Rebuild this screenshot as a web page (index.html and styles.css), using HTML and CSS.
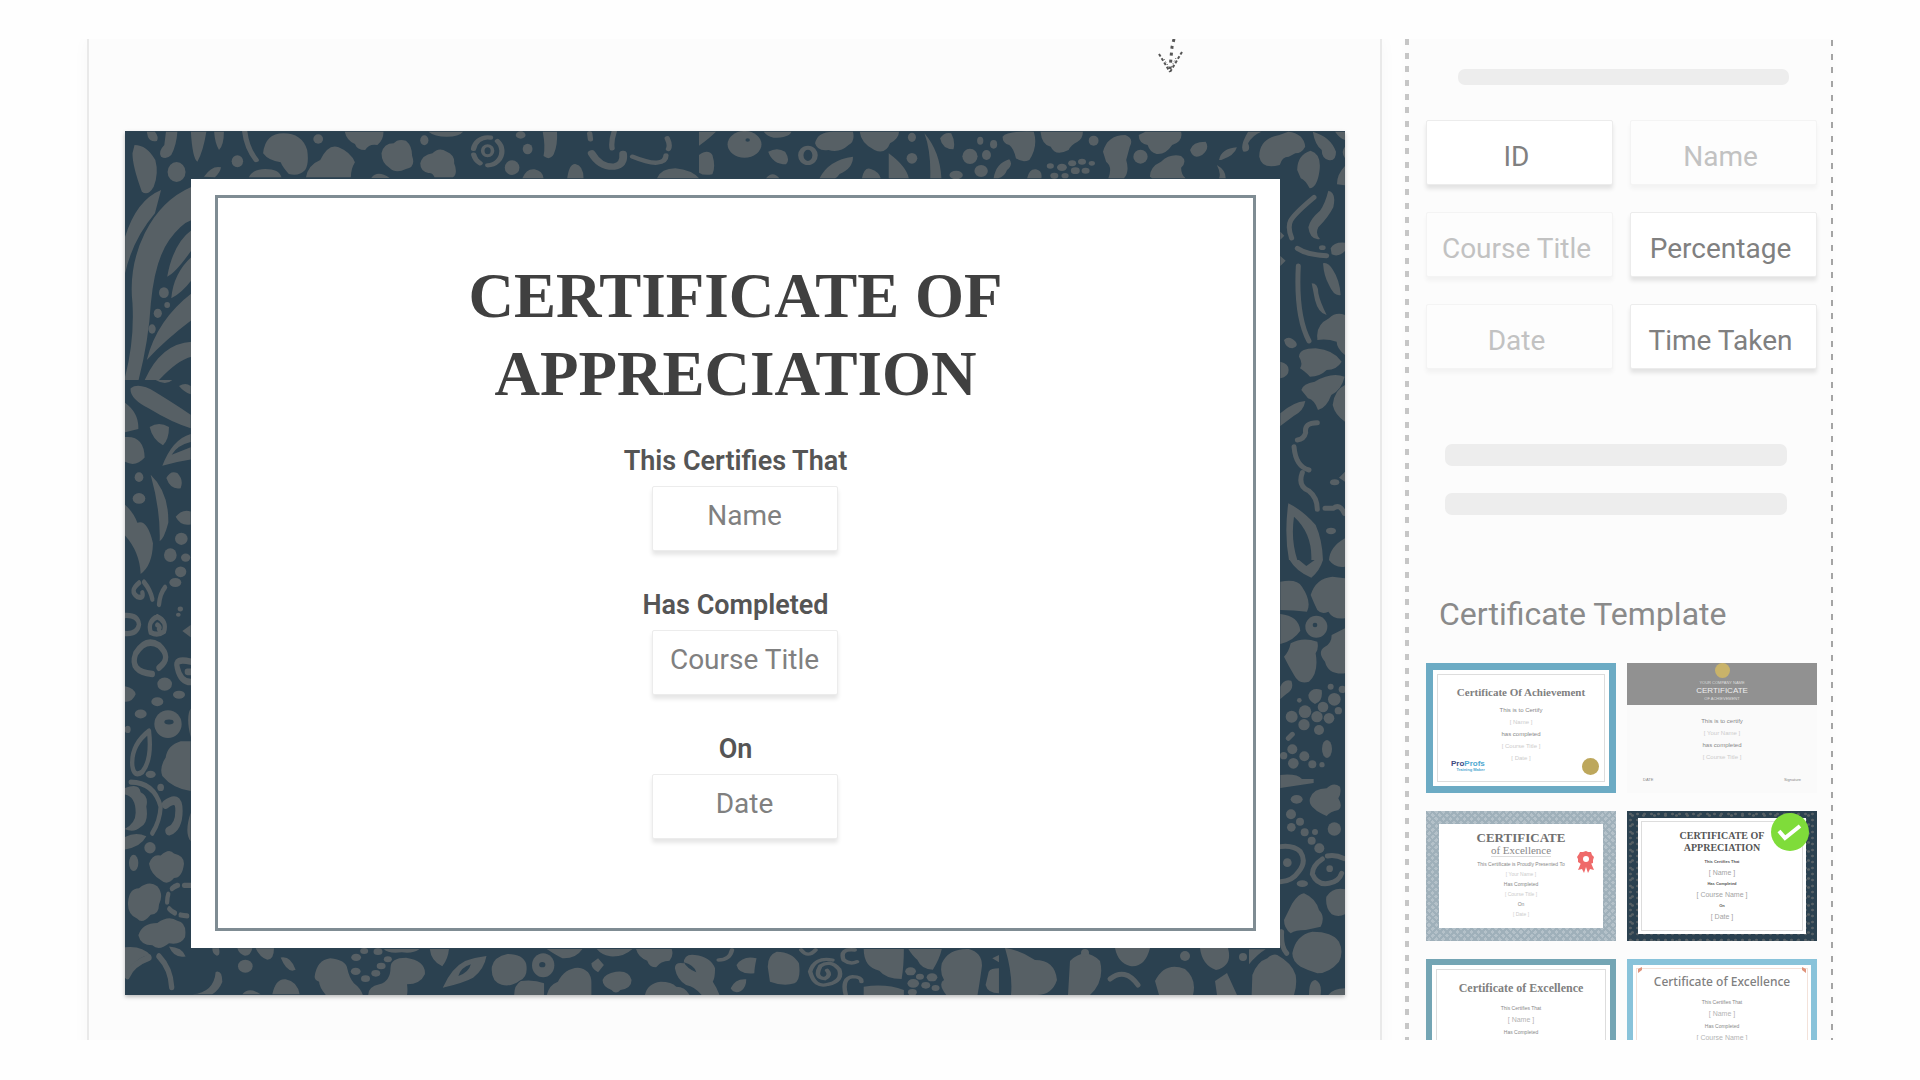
FILE: index.html
```html
<!DOCTYPE html>
<html lang="en">
<head>
    <meta charset="UTF-8">
    <meta name="viewport" content="width=device-width, initial-scale=1.0">
    <title>Certificate Designer</title>
    <link rel="stylesheet" href="styles.css">
</head>
<body>
    <div class="designer">
        <main class="canvas">
            <div class="canvas-head">
                <svg class="arrow" viewBox="0 0 26 36" width="26" height="36" aria-hidden="true">
                    <path d="M16 0 L14 8 L12 30" stroke-width="3" stroke-dasharray="3 4"/>
                    <path d="M1 15 L12 33 M24 13 L12 33" stroke-width="2" stroke-dasharray="3 2"/>
                    <path d="M6 20 L12 30 M18 19 L12 30" stroke-width="1" stroke-dasharray="1 2"/>
                </svg>
            </div>

            <section class="certificate">
                <svg class="floral" viewBox="0 0 1220 864" preserveAspectRatio="none" aria-hidden="true">
                    <!-- top left corner, top edge and left leaves -->
                    <g transform="translate(-66 -111) scale(.4082 .3333)">
                        <path d="M185 375Q215 375 236 420Q245 460 232 500Q218 530 203 515Q180 440 180 400ZM215 335h20q10 15 5 28q-15 5-22-12zM262 335h28q-2 40-15 70q-12 15-25 5q-8-15 8-35zM323 335h38q-8 60-22 90q-12-10-16-90M380 335h24q0 40-12 55q-10-20-12-55M355 470q20-35 42-28q-2 15-15 30z"/>
                        <path d="M500 400q5-60 50-60q45 0 58 50q5 40-5 60q-15 20-40 12q-15-20-20-35q-30-5-43-27M605 472q5-37 35-52q20-50 45-38q30 15 40 45q-10 20-10 45zM465 472q10-25 40-25q35 0 40 25zM700 335h95q0 25-15 40q-20-5-30 15q-20 0-25-18q-20-10-25-37M790 400q5-30 30-30q10-15 30-8q15 15 15 45q10 35-15 40q-25 15-40-3q-20-15-20-44M885 430q5-25 30-30q15-20 35-5q20 10 18 35q10 30-3 42h-45q-5-15-15-13q-20-5-20-29M905 335h85q-10 15-40 15q-30 0-45-15M765 474q15-25 45 0z"/>
                        <path d="M1185 335h35q2 40-8 68q-10 20-25 5q5-30-2-73M1135 475q10-30 30-27q20 5 22 27zM1245 475q5-45 20-43q20 5 20 43zM1465 475q10-30 45-30q40 5 58 30z"/>
                        <path d="M250 510Q190 540 162 650V760Q180 660 235 580ZM325 500Q250 540 210 640Q170 740 180 850Q185 960 162 1070V1080H195Q220 960 225 850Q235 720 270 660Q300 610 325 600ZM325 630Q280 670 265 770Q285 760 325 690zM325 710Q280 760 275 835Q300 820 325 780zM325 820Q240 900 215 1020Q260 960 325 900zM325 965Q250 970 210 1080H245Q290 1020 325 1010"/>
                        <ellipse cx="288" cy="456" rx="22" ry="30"/>
                        <ellipse cx="437" cy="424" rx="14" ry="18"/>
                        <ellipse cx="635" cy="357" rx="12" ry="14"/>
                        <ellipse cx="895" cy="361" rx="10" ry="15"/>
                        <ellipse cx="1148" cy="387" rx="12" ry="16"/>
                        <ellipse cx="1131" cy="345" rx="12" ry="11"/>
                        <ellipse cx="1110" cy="443" rx="18" ry="22"/>
                        <ellipse cx="257" cy="818" rx="12" ry="16"/>
                        <ellipse cx="265" cy="855" rx="7" ry="9"/>
                        <ellipse cx="242" cy="880" rx="10" ry="14"/>
                        <ellipse cx="228" cy="927" rx="9" ry="14"/>
                        <g class="line" stroke-width="13">
                            <path d="M455 335q5 50 28 85M1300 340l2 18M1360 335q-8 30-5 50M1490 355q8 20 3 32M1405 410q40 20 60 18q22-2 22-22"/>
                            <ellipse cx="1050" cy="394" rx="35" ry="42" stroke-dasharray="60 20 30 18"/>
                            <ellipse cx="1050" cy="392" rx="12" ry="15" stroke-width="9"/>
                            <path d="M1305 400q20 42 55 40q25-5 22-38" stroke-width="19"/>
                        </g>
                    </g>

                    <!-- top edge, right half -->
                    <g transform="translate(574 -111) scale(.4464 .3333)">
                        <path d="M0 335h38q-15 20-38 42zM0 405q20-20 30 0q8 35 0 58q-20 5-30-5zM155 395q20-15 38 0q12 25 2 38q-30 0-40-38M145 335h62q-5 18-40 18q-15-5-22-18M260 370q5-35 40-35h45q5 30-10 40q-20 25-45 15q-25 5-30-20M360 335h88q0 20-20 35q-10 35-35 20q-30-20-33-55M270 475q20-55 75-65q0 35-30 52q-5 10-10 13zM425 400q40 40 45 75h-45zM365 475q5-35 20-28q20 10 22 28zM505 340q35 55 38 135h-25q2-80-13-135M540 355q10-20 25-15q10 25 5 48q-25 0-30-33M150 475q15-25 30 0z"/>
                        <path d="M680 350q10-18 70-15q10 45-10 85q-15 10-30-5q-5-30-15-40q-15-5-15-25M765 335h95q0 20-12 30q-15 10-20 25q-30 20-40-10q-20-5-23-45M660 475q5-45 35-57q10 15-5 32q-5 20-20 25zM735 475q5-30 20-27q15 5 12 27zM905 395q10-50 50-50q20 10 10 35q-5 25-8 40q8 35-5 55h-35q10-35-5-50zM985 345l15-10h80q5 30-20 40q-15 30-35 27q-15-5-20-27q-20-5-20-30M1010 470q0-30 25-45q20-25 45-17q15 15 0 35q0 20 10 32h-75zM1100 390q5-25 35-25q10 20-8 40q-20 15-27-15M1165 420q5-35 40-38q-5 25-35 38M1230 335h30q-20 10-30 35q8 25-10 25q-10-15 10-60M1160 435q20 15 20 40h-15q5-15-5-40"/>
                        <path d="M1255 410q0-55 45-65l20-10q35 5 38 45q-8 20-22 20l-15 10q-15 0-20 25q-40 15-46-25M1375 335q40 15 52 60q0 30-17 25q-15-5-15-30q-15-15-20-55M1340 450q0-45 30-58q25 10 20 60q-5 50-22 53q-10-25-20-30zM1447 438q-18 25-18 55l18 3zM1425 335q10 20 22 25v-25zM1447 380q-10 15 0 35z"/>
                        <ellipse cx="102" cy="373" rx="38" ry="40"/>
                        <ellipse cx="477" cy="352" rx="9" ry="14"/>
                        <ellipse cx="477" cy="415" rx="12" ry="16"/>
                        <ellipse cx="607" cy="409" rx="17" ry="23"/>
                        <ellipse cx="644" cy="405" rx="10" ry="15"/>
                        <ellipse cx="660" cy="373" rx="8" ry="13"/>
                        <ellipse cx="630" cy="362" rx="7" ry="12"/>
                        <ellipse cx="632" cy="453" rx="15" ry="18"/>
                        <ellipse cx="576" cy="465" rx="15" ry="13"/>
                        <ellipse cx="884" cy="362" rx="11" ry="15"/>
                        <ellipse cx="989" cy="410" rx="16" ry="21"/>
                        <g>
                            <circle cx="787" cy="438" r="8"/><circle cx="813" cy="442" r="11"/><circle cx="836" cy="430" r="9"/>
                            <circle cx="858" cy="425" r="9"/><circle cx="880" cy="430" r="7"/><circle cx="843" cy="452" r="10"/>
                            <circle cx="866" cy="452" r="9"/><circle cx="796" cy="467" r="9"/><circle cx="820" cy="467" r="8"/>
                        </g>
                        <ellipse class="line" cx="244" cy="406" rx="16" ry="23" stroke-width="12"/>
                        <ellipse class="hole" cx="109" cy="360" rx="5" ry="5"/>
                    </g>

                    <!-- left edge, lower part -->
                    <g transform="translate(-16 249) scale(.3333 .4082)">
                        <path d="M65 20Q90 5 140 30Q200 60 245 85V118Q190 105 120 70Q60 45 65 20M47 55Q90 80 88 120L47 128zM47 140Q105 135 107 190Q80 215 47 200zM122 115Q150 100 180 115Q180 145 162 160Q130 145 122 115M160 210Q190 145 245 132V152Q205 160 188 183Q215 175 245 165V195Q205 200 160 210M125 232Q180 275 178 350Q165 390 152 395Q155 320 125 232M47 305Q75 325 85 350Q115 340 132 400Q130 455 95 475Q92 420 47 380zM172 240Q185 220 205 228Q225 245 215 265Q185 270 172 240M210 15Q230 5 245 15V35Q225 30 210 15M140 0h50q-20 15-50 0M200 335q20-20 45-13v32q-30 5-45-19M47 750q30 5 33 20q-10 20-33 18z"/>
                        <path d="M245 885H215Q175 895 170 925Q150 950 160 970Q190 1000 245 1007zM47 1000Q90 985 95 1010Q120 1020 112 1045Q120 1085 95 1095Q75 1110 47 1100Q80 1085 80 1060Q80 1020 47 1015zM120 1185Q130 1160 155 1165Q180 1145 195 1160Q225 1165 225 1185Q220 1220 195 1220Q175 1240 155 1225Q125 1210 120 1185M57 1280Q60 1245 90 1245Q120 1225 145 1240Q165 1260 150 1285Q150 1310 125 1310Q100 1335 85 1320Q55 1310 57 1280M88 1360Q100 1330 145 1330Q180 1310 205 1325Q235 1330 228 1365Q215 1385 180 1380Q150 1400 130 1385Q95 1385 88 1360M47 1120Q80 1105 112 1118Q95 1145 47 1150zM245 600l-25 15 25 15zM245 805q-15 20 0 70zM245 1060q-20 50 0 70zM180 1388Q220 1390 230 1412Q195 1418 180 1388M47 1390Q100 1385 125 1410Q80 1410 47 1465zM310 1392h20q5 20-8 18q-12-5-12-18M385 1392h45q-5 20-25 18q-15-5-20-18M440 1392h55q0 28-20 28q-22-5-35-28M515 1415q30-5 45 30q-25 10-45-30M490 1505q10-40 40-37q35 5 42 37zM250 1505q65-5 70-55q20-5 20 25q-10 20-30 30zM400 1505q20-20 55 0z"/>
                        <ellipse cx="90" cy="238" rx="13" ry="12"/>
                        <ellipse cx="90" cy="290" rx="19" ry="13"/>
                        <ellipse cx="217" cy="389" rx="19" ry="15"/>
                        <ellipse cx="184" cy="429" rx="19" ry="17"/>
                        <ellipse cx="230" cy="435" rx="14" ry="10"/>
                        <ellipse cx="215" cy="470" rx="17" ry="13"/>
                        <ellipse cx="199" cy="496" rx="18" ry="11"/>
                        <ellipse cx="214" cy="561" rx="8" ry="6"/>
                        <ellipse cx="208" cy="575" rx="7" ry="5"/>
                        <ellipse cx="167" cy="745" rx="22" ry="16"/>
                        <ellipse cx="210" cy="771" rx="18" ry="10"/>
                        <ellipse cx="145" cy="788" rx="18" ry="11"/>
                        <ellipse cx="95" cy="818" rx="18" ry="11"/>
                        <ellipse cx="56" cy="856" rx="9" ry="9"/>
                        <ellipse cx="125" cy="966" rx="15" ry="9"/>
                        <ellipse cx="155" cy="998" rx="10" ry="9"/>
                        <ellipse cx="123" cy="1146" rx="17" ry="14"/>
                        <ellipse cx="74" cy="1183" rx="14" ry="20"/>
                        <ellipse cx="409" cy="1436" rx="22" ry="16"/>
                        <g class="line" stroke-width="13">
                            <path d="M90 497q-30 20-5 34q20 5 15-10M105 495q20 20 25 42M168 508q-15 15-18 42"/>
                            <path d="M47 577q40-2 43 22q-5 25-43 22M145 580q-30 10-20 38q20 10 40-2q10-25-20-36M145 600q10 5 5 10"/>
                            <path d="M130 720q-70-5-50-50q30-40 70-20q40 30 0 55" stroke-width="16"/>
                            <path d="M245 690q-50-10-40 15q10 35 40 35M235 715h10" stroke-width="16"/>
                            <path d="M120 860q-55 35-50 85q5 30 30 15q30-30 20-100M65 985q70 0 90 60q-2 35-25 65"/>
                            <path d="M170 1040q40-25 40 15q0 40-30 50" stroke-width="22"/>
                            <path d="M55 1460q15-30 65-45M150 1412q35 30 38 75" stroke-width="16"/>
                            <path d="M245 1238h-40q-35 10-30 50q15 25 70 25" stroke-dasharray="20 18"/>
                        </g>
                        <ellipse cx="177" cy="843" rx="41" ry="34"/>
                        <ellipse class="hole" cx="180" cy="838" rx="14" ry="6"/>
                    </g>

                    <!-- right edge, upper part -->
                    <g transform="translate(1124 -11) scale(.3333)">
                        <path d="M238 212q25 5 15 50q-15 30-45 60q-10 20 5 35q-30 5-35-35q5-25 35-50q15-20 25-60M222 430q15-5 30 20q20 30 23 75q-20 5-35-30q-15-25-18-65M188 490q20 0 20 30q5 25 25 65q-25-5-35-45zM245 385q10-20 43-17v25q-20 20-40 10zM205 655q-5-40 35-60q20-20 48-10v120q-25-20-25-40q-30-10-58-5zM150 710q0-25 50-25q55 5 78 40q-15 25-45 25q-20 20-50 20q-20-20-30-25q10-15-3-35M157 810q5-20 40-25q50-30 90-15q-10 40-40 55q-15 40-40 45q-10-30-30-35zM288 795v110q-30-20-37-50q5-45 37-60M94 880q40-35 75-37q-5 30-35 45l-40 30zM105 660q15-15 35 5q10 15-10 20q-20 0-25-25M94 725q25 5 25 25t-25 25zM288 1255q-45 25-48 65h48z"/>
                        <path d="M118 1150Q160 1170 200 1215Q220 1260 222 1320H187Q190 1240 135 1190Q125 1260 145 1320H120Q105 1240 118 1150"/>
                        <ellipse cx="246" cy="1233" rx="15" ry="10"/>
                        <ellipse cx="257" cy="1087" rx="14" ry="9"/>
                        <ellipse cx="220" cy="383" rx="10" ry="7"/>
                        <path d="M94 335l12 12-12 12zM94 408l16 14-16 16zM288 1055l-18 18 18 12z"/>
                        <g class="line" stroke-width="15">
                            <path d="M195 232q-60 50-70 70q-10 20 3 52M145 385q30 20 88 22M148 438q-8 150 32 225M205 908q-40 0-35 30q-5 20-25 22M135 980q5 60 45 70M160 1058q-15 40 20 55q25 20 25 55M228 1165h25q20-15 33 15"/>
                        </g>
                    </g>

                    <!-- right edge, lower part -->
                    <g transform="translate(1124 429) scale(.3333)">
                        <path d="M122 0q20 35 65 53q25-20 35-53h-25l-25 18-22-18zM240 0h48v20q-30 5-48-20M94 65q50-10 65 15q30 45 15 75q-40-5-80-5zM185 105q15-50 65-55l38 5v120q-35 5-50-20q-20 10-33-5q-10-20-20-45M94 162q55 5 60 50q-20 30-60 40zM105 290q15-15 20-40q35-20 80-5q5 20-5 35q10 60-20 85q-30 10-45-20q-15-25-30-55M288 205v135q-50 5-60-35q-25-30 0-45q20-10 20-35zM94 380q10-25 33-18q10 25-15 40l-18 15zM178 405q10-25 40-15q5 35-20 42q-20-10-20-27M94 645q50-5 65 12h35v12l-100 15zM183 715q10-30 50-30q20-20 40-5q5 20-5 35q15 25 0 35q-25 5-35 18q-25-10-35-20q-20-15-15-33"/>
                        <path d="M105 1080q15-30 25-50q20-30 35-30q35 15 45 50q20 20 5 50q-25 5-45 10q-30 0-45 10q-20-15-20-40M232 1010q20-30 56-22v75q-20 10-40 0q-20-20-16-53M130 1180q10-55 60-65q60 0 80 30q15 30 0 60q-30 35-65 35q-30-10-50-20q-25-15-25-40M10 1245q15-40 45-50q15-15 30-10q45 25 55 60q5 30-5 60H8zM0 1168h50q-25 15-50 45zM180 1305q0-45 20-45q20 10 15 45zM238 1305q15-20 50-20v20z"/>
                        <g>
                            <circle cx="128" cy="470" r="18"/><circle cx="168" cy="455" r="19"/><circle cx="165" cy="494" r="17"/>
                            <circle cx="204" cy="470" r="17"/><circle cx="222" cy="441" r="16"/><circle cx="256" cy="418" r="19"/>
                            <circle cx="240" cy="475" r="16"/><circle cx="210" cy="510" r="15"/><circle cx="268" cy="452" r="11"/>
                            <circle cx="245" cy="380" r="9"/><circle cx="280" cy="388" r="11"/><circle cx="151" cy="421" r="7"/>
                            <circle cx="130" cy="568" r="15"/><circle cx="104" cy="587" r="11"/><circle cx="133" cy="610" r="16"/>
                            <circle cx="166" cy="589" r="15"/><circle cx="190" cy="613" r="12"/><circle cx="219" cy="614" r="8"/>
                            <circle cx="126" cy="763" r="15"/><circle cx="153" cy="785" r="12"/><circle cx="127" cy="802" r="13"/>
                            <circle cx="167" cy="817" r="12"/><circle cx="198" cy="816" r="9"/><circle cx="188" cy="842" r="12"/>
                            <circle cx="211" cy="865" r="15"/><circle cx="256" cy="807" r="20"/><circle cx="115" cy="908" r="13"/>
                            <circle cx="242" cy="926" r="10"/>
                        </g>
                        <ellipse cx="234" cy="567" rx="15" ry="27"/>
                        <ellipse cx="143" cy="718" rx="18" ry="13"/>
                        <ellipse cx="160" cy="971" rx="17" ry="10"/>
                        <circle cx="202" cy="200" r="33"/>
                        <circle class="hole" cx="198" cy="195" r="7"/>
                        <g class="line" stroke-width="15">
                            <path d="M94 860q40-5 60 15q20 30-5 60q-20 30-55 30M235 888q25-5 50 8M220 897q-30 20-30 45q15 35 50 28q30-5 38-30M118 535l12-12M98 1115q-3 45 15 65"/>
                        </g>
                    </g>

                    <!-- bottom edge -->
                    <g transform="translate(174 769) scale(.4464 .3333)">
                        <path d="M35 230q5-50 35-55q35 5 38 30q5 30 15 45q15 15 20 35H60q-15-25-15-40q-10-5-10-15M155 285q0-25 25-32q25-10 25-50q0-30 35-30q45 10 42 50q-10 30-40 30q2 20 0 32zM293 147h43q-2 30-15 52q-25-15-28-52M322 263q20-60 50-80q20-10 48-15q-5 40-30 65q-20 15-68 30M432 200q5-30 35-38q35 0 42 30q5 40-15 50q-20 20-40 12q-25-10-22-54M555 285q5-30 25-40q15-40 45-42q30 5 30 45v37zM482 285q0-30 15-42q30-5 52 7v35zM555 147h80q-15 30-45 28q-15-10-35-28M667 147h80q-20 25-50 22q-20-5-30-22M755 147h80q5 20-5 35q-20 0-30 20q-15 0-20-20q-20-10-25-35M680 240q5-20 30-25q30-5 35 25q0 25-25 30q-10 15-20 0q-20-10-20-30M655 190l15-15 13 20-13 22q-15-10-15-27M775 285q5-35 35-40q25 0 35 15q20 0 30 25zM842 205q0-20 20-15q0-30 25-25q35 5 45 40q0 30-5 40q10 20 15 40h-40q-15-25-35-30q-20-15-25-50M980 195q15-30 45-20q-5 30-5 45q-35 5-40-25M967 265q10-30 35-27q0 25-12 35q-15 10-23-8M1050 200q0-35 20-45q35 0 50 35q5 50-10 60q-25 10-55-5zM1265 147h90q0 50-5 90q-35 0-50-25q-35-10-35-65M1365 147h75q-5 30-20 62q-25 0-35-30q-10-10-20-32M1440 190q15-45 60-43q30 10 30 50q-5 50-10 88h-70q-20-35-5-45q-10-20-5-50M1265 260q50-10 90 10v15h-90zM1545 215q5-10 23-10v75q-25 0-30-25zM1553 175l15-10v22zM190 147h80q-15 15-40 10q-30 5-40-10"/>
                        <g>
                            <circle cx="128" cy="172" r="11"/><circle cx="146" cy="153" r="9"/><circle cx="177" cy="155" r="10"/>
                            <circle cx="199" cy="178" r="9"/><circle cx="184" cy="198" r="10"/><circle cx="172" cy="220" r="10"/>
                            <circle cx="149" cy="236" r="10"/><circle cx="127" cy="214" r="11"/><circle cx="1370" cy="214" r="12"/>
                            <circle cx="1391" cy="230" r="9"/><circle cx="1418" cy="232" r="12"/><circle cx="1376" cy="250" r="13"/>
                            <circle cx="1404" cy="256" r="10"/><circle cx="1426" cy="264" r="9"/><circle cx="1374" cy="277" r="10"/>
                        </g>
                        <ellipse cx="547" cy="196" rx="25" ry="36"/>
                        <ellipse class="hole" cx="545" cy="194" rx="7" ry="8"/>
                        <g class="hole"><path d="M357 228q5-25 28-35q-5 25-28 35M862 187q25 10 28 30q-20-10-28-30"/></g>
                        <g class="line" stroke-width="10">
                            <path d="M970 150q-5 30-30 30M1125 150q15 25 32 0M1245 150q-35-5-25 30q15 15 30 5M1195 180q-40-10-50 35q10 50 40 38q35-10 25-45q-20-30-42-10q-15 35 10 38q15-10 5-25M1225 285q-10-50 15-55q20 0 20 15"/>
                        </g>
                    </g>
                    <g>
                        <path d="M880 817q15 2 30 12q20 0 22 20q-5 15-20 15h-26q2-20-6-47M945 830q15-15 30 0q5 20-10 34h-22zM990 817h35q-5 20-20 18q-12-3-15-18M1030 850q10-20 30-12q12 10 8 26h-34zM1075 817h28q5 18-12 22q-14-5-16-22M1090 850l12-8 10 22h-20z"/>
                        <path class="line" d="M985 848q15-12 28 6" stroke-width="5"/>
                        <circle cx="1060" cy="825" r="5"/><circle cx="960" cy="822" r="4"/><circle cx="1118" cy="826" r="4"/>
                    </g>
                </svg>

                <div class="paper">
                    <div class="paper-line">
                        <h1>Certificate of<br>Appreciation</h1>
                        <div class="field">
                            <h2>This Certifies That</h2>
                            <button type="button" class="chip">Name</button>
                        </div>
                        <div class="field">
                            <h2>Has Completed</h2>
                            <button type="button" class="chip">Course Title</button>
                        </div>
                        <div class="field">
                            <h2>On</h2>
                            <button type="button" class="chip">Date</button>
                        </div>
                    </div>
                </div>
            </section>
        </main>

        <aside class="sidebar">
            <div class="bar bar-small"></div>

            <div class="chips">
                <button type="button" class="chip">ID</button>
                <button type="button" class="chip" disabled>Name</button>
                <button type="button" class="chip" disabled>Course Title</button>
                <button type="button" class="chip">Percentage</button>
                <button type="button" class="chip" disabled>Date</button>
                <button type="button" class="chip">Time Taken</button>
            </div>

            <div class="bars">
                <div class="bar"></div>
                <div class="bar"></div>
            </div>

            <h3>Certificate Template</h3>

            <div class="templates">
                <button type="button" class="template achievement">
                    <span class="sheet">
                        <span class="name">Certificate Of Achievement</span>
                        <span class="text">This is to Certify</span>
                        <span class="slot">[ Name ]</span>
                        <span class="text">has completed</span>
                        <span class="slot">[ Course Title ]</span>
                        <span class="slot">[ Date ]</span>
                        <span class="foot">
                            <span class="brand"><b>Pro</b>Profs<small>Training Maker</small></span>
                            <span class="seal"></span>
                        </span>
                    </span>
                </button>

                <button type="button" class="template banner">
                    <span class="banner-head">
                        <span class="seal"></span>
                        <small>YOUR COMPANY NAME</small>
                        <span class="name">CERTIFICATE</span>
                        <small>OF ACHIEVEMENT</small>
                    </span>
                    <span class="text">This is to certify</span>
                    <span class="slot">[ Your Name ]</span>
                    <span class="text">has completed</span>
                    <span class="slot">[ Course Title ]</span>
                    <span class="foot"><small>DATE</small><small>Signature</small></span>
                </button>

                <button type="button" class="template guilloche">
                    <span class="sheet">
                        <span class="name">CERTIFICATE</span>
                        <span class="subname">of Excellence</span>
                        <span class="text">This Certificate is Proudly Presented To</span>
                        <span class="slot">[ Your Name ]</span>
                        <span class="text">Has Completed</span>
                        <span class="slot">[ Course Title ]</span>
                        <span class="text">On</span>
                        <span class="slot">[ Date ]</span>
                    </span>
                    <svg class="ribbon" viewBox="0 0 18 22" width="18" height="22" aria-hidden="true">
                        <path d="M4 12L1 19l4-1 2 4 2-6 2 6 2-4 4 1-3-7z"/>
                        <path d="M9 0l2 1 3 0 1 3 2 2-1 3 0 3-3 1-2 2-2-1-3 1-2-2-3-2 0-3-1-2 2-3 1-2 3 0z"/>
                        <circle cx="9" cy="8" r="3" fill="#fff"/>
                    </svg>
                </button>

                <button type="button" class="template appreciation" aria-pressed="true">
                    <span class="sheet">
                        <span class="name">CERTIFICATE OF<br>APPRECIATION</span>
                        <span class="text">This Certifies That</span>
                        <span class="slot">[ Name ]</span>
                        <span class="text">Has Completed</span>
                        <span class="slot">[ Course Name ]</span>
                        <span class="text">On</span>
                        <span class="slot">[ Date ]</span>
                    </span>
                    <svg class="check" viewBox="0 0 38 38" width="38" height="38" aria-hidden="true">
                        <circle cx="19" cy="19" r="19"/>
                        <path d="M8 18l6 7 15-12"/>
                    </svg>
                </button>

                <button type="button" class="template teal">
                    <span class="sheet">
                        <span class="name">Certificate of Excellence</span>
                        <span class="text">This Certifies That</span>
                        <span class="slot">[ Name ]</span>
                        <span class="text">Has Completed</span>
                        <span class="slot">[ Course Name ]</span>
                    </span>
                </button>

                <button type="button" class="template sky">
                    <span class="sheet">
                        <span class="name">Certificate of Excellence</span>
                        <span class="text">This Certifies That</span>
                        <span class="slot">[ Name ]</span>
                        <span class="text">Has Completed</span>
                        <span class="slot">[ Course Name ]</span>
                    </span>
                    <svg class="corners" viewBox="0 0 168 6" width="168" height="6" aria-hidden="true">
                        <path d="M0 6V2L4 0v3zM168 6V2l-4-2v3z"/>
                    </svg>
                </button>
            </div>
        </aside>
    </div>
</body>
</html>
```

FILE: styles.css
```css
* {
    box-sizing: border-box;
}

body {
    margin: 0;
    padding: 39px 0 40px;
    background-color: #fefefe;
    font-family: Roboto, "Liberation Sans", sans-serif;
    color: #808080;
}

h1, h2, h3 {
    margin: 0;
}

.designer {
    display: grid;
    grid-template-columns: 1fr 428px;
    gap: 23px;
    height: calc(100vh - 79px);
    padding: 0 87px;
    overflow: hidden;
}

/* Canvas */
.canvas {
    padding: 0 35px 0 36px;
    background-color: #fcfcfc;
    border-left: 2px solid #e9e9e9;
    border-right: 2px solid #e9e9e9;
    box-shadow: 0 0 16px rgba(0, 0, 0, 0.03);
}

.canvas-head {
    display: flex;
    justify-content: flex-end;
    height: 92px;
    padding-right: 161px;
}

.arrow {
    fill: none;
    stroke: #555;
}

.certificate {
    position: relative;
    display: flex;
    aspect-ratio: 1220 / 864;
    padding: 48px 65px 47px 66px;
    background-color: #2b4150;
    box-shadow: 0 2px 4px rgba(0, 0, 0, 0.25);
}

.floral {
    position: absolute;
    inset: 0;
    width: 100%;
    height: 100%;
    fill: #576065;
}

.floral .line {
    fill: none;
    stroke: #576065;
    stroke-linecap: round;
}

.floral .hole {
    fill: #2b4150;
}

.paper {
    position: relative;
    flex: 1;
    display: flex;
    padding: 16px 24px 17px;
    background-color: #fff;
}

.paper-line {
    flex: 1;
    padding-top: 59px;
    border: 3px solid #7f8c93;
    text-align: center;
}

h1 {
    color: #404040;
    font-family: "Liberation Serif", serif;
    font-size: 63px;
    line-height: 78px;
    text-transform: uppercase;
}

.field {
    margin-top: 37px;
}

h1 + .field {
    margin-top: 31px;
}

.field h2 {
    margin-bottom: 8px;
    color: #555;
    font-size: 27px;
    font-weight: 600;
    line-height: 34px;
}

.chip {
    display: block;
    width: 100%;
    height: 65px;
    padding: 8px 6px 0 0;
    background-color: #fff;
    border: 1px solid #ececec;
    border-radius: 2px;
    box-shadow: 0 4px 4px rgba(0, 0, 0, 0.1);
    color: #808080;
    font-family: inherit;
    font-size: 28px;
}

.chip:disabled {
    background-color: #fdfdfd;
    border-color: #f4f4f4;
    box-shadow: 0 4px 4px rgba(0, 0, 0, 0.04);
    color: #c2c2c2;
}

.field .chip {
    width: 186px;
    margin: 0 auto;
    padding: 0 0 6px;
    transform: translateX(9px);
}

/* Sidebar */
.sidebar {
    padding: 30px 16px 0 21px;
    background:
        linear-gradient(#c6c6c6 6px, transparent 6px 14px, #c6c6c6 14px 20px, transparent 20px 27px, #c6c6c6 27px 33px, transparent 33px) left top / 4px 41px repeat-y,
        linear-gradient(transparent 1px, #a4a4a4 1px 7px, transparent 7px 15px, #a4a4a4 15px 21px, transparent 21px 28px, #a4a4a4 28px 34px, transparent 34px) right top / 2px 41px repeat-y,
        #fcfcfc;
    box-shadow: 0 0 8px #fcfcfc;
}

.bar {
    height: 22px;
    background-color: #ededed;
    border-radius: 7px;
}

.bar-small {
    height: 16px;
    margin: 0 28px 35px 32px;
}

.chips {
    display: grid;
    grid-template-columns: 1fr 1fr;
    gap: 27px 17px;
}

.bars {
    display: grid;
    gap: 27px;
    margin: 75px 30px 79px 19px;
}

h3 {
    margin: 0 0 29px 13px;
    color: #8a8a8a;
    font-size: 32px;
    font-weight: 400;
    line-height: 40px;
}

.templates {
    display: grid;
    grid-template-columns: 1fr 1fr;
    grid-auto-rows: 130px;
    gap: 18px 11px;
}

.template {
    position: relative;
    display: flex;
    flex-direction: column;
    align-items: stretch;
    padding: 0;
    background-color: #fff;
    border: 0 solid;
    color: #888;
    font-family: "Liberation Sans", sans-serif;
    font-size: 5px;
    line-height: 12px;
    text-align: center;
}

.template .sheet {
    flex: 1;
    display: flex;
    flex-direction: column;
    background-color: #fff;
    outline: 1px solid #ddd;
    outline-offset: -5px;
}

.template small {
    font-size: 4px;
    line-height: 6px;
}

.slot {
    color: #ccc;
}

.name {
    font-family: "Liberation Serif", serif;
    font-weight: bold;
    color: #808080;
}

.foot {
    display: flex;
    justify-content: space-between;
    align-items: center;
}

.seal {
    width: 17px;
    height: 17px;
    border-radius: 50%;
    background-color: #bda75c;
}

.achievement {
    padding: 7px;
    background-color: #6cabc4;
    font-size: 6px;
}

.achievement .sheet {
    padding-top: 14px;
}

.achievement .name {
    margin-bottom: 4px;
    font-size: 11px;
    line-height: 16px;
}

.achievement .foot {
    padding: 0 10px 0 18px;
    margin-top: -6px;
}

.brand {
    color: #4fa8d0;
    font-size: 8px;
    font-weight: bold;
    line-height: 6px;
    text-align: left;
}

.brand b {
    color: #3d4a80;
}

.brand small {
    display: block;
    text-align: right;
}

.banner {
    background-color: #fafafa;
    font-size: 6px;
}

.banner-head {
    display: flex;
    flex-direction: column;
    align-items: center;
    height: 42px;
    margin-bottom: 10px;
    background-color: #919191;
    color: #ddd;
}

.banner-head .seal {
    width: 15px;
    height: 15px;
    flex: none;
    margin-bottom: 2px;
    background-color: #c9b36a;
}

.banner-head .name {
    color: #eee;
    font-family: "Liberation Sans", sans-serif;
    font-size: 8px;
    font-weight: normal;
    line-height: 10px;
}

.banner .foot {
    padding: 14px 16px 0;
}

.guilloche {
    padding: 13px;
    background-color: #b4c1c9;
    background-image: repeating-linear-gradient(45deg, #9fb0ba 0 2px, transparent 2px 5px), repeating-linear-gradient(-45deg, #9fb0ba 0 2px, transparent 2px 5px);
    line-height: 10px;
}

.guilloche .sheet {
    padding-top: 7px;
    outline: none;
}

.guilloche .name {
    font-size: 13px;
    line-height: 14px;
    color: #707070;
}

.guilloche .subname {
    font-family: "Liberation Serif", serif;
    font-size: 11px;
    line-height: 11px;
    margin: 0 auto 2px;
    border-bottom: 1px solid #ddd;
}

.ribbon {
    position: absolute;
    top: 40px;
    right: 21px;
    fill: #ef6a6a;
}

.appreciation {
    padding: 7px 11px;
    background-color: #2b4150;
    background-image: radial-gradient(#576065 1px, transparent 2px), radial-gradient(#576065 1px, transparent 2px);
    background-size: 7px 6px, 11px 9px;
    line-height: 11px;
}

.appreciation .sheet {
    padding-top: 12px;
    outline-offset: -4px;
}

.appreciation .name {
    margin-bottom: 2px;
    color: #555;
    font-size: 10px;
    line-height: 12px;
}

.appreciation .text {
    color: #555;
    font-weight: bold;
    font-size: 4px;
}

.appreciation .slot {
    color: #a4a4a4;
    font-size: 7px;
}

.check {
    position: absolute;
    top: 2px;
    right: 8px;
    fill: #7fdc3a;
}

.check path {
    fill: none;
    stroke: #fff;
    stroke-width: 4;
}

.teal {
    padding: 6px;
    background-color: #74a5b4;
}

.sky {
    padding: 6px;
    background-color: #89c3da;
}

.teal .sheet,
.sky .sheet {
    padding-top: 14px;
}

.teal .name,
.sky .name {
    margin-bottom: 5px;
    font-size: 12px;
    line-height: 18px;
}

.teal .slot,
.sky .slot {
    color: #b4b4b4;
    font-size: 7px;
}

.sky .sheet {
    padding-top: 8px;
    outline-color: #f3e2da;
    outline-offset: -4px;
}

.sky .name {
    font-family: "Noto Sans", sans-serif;
    font-weight: 500;
}

.corners {
    position: absolute;
    top: 8px;
    left: 11px;
    fill: #e0947c;
}
```
